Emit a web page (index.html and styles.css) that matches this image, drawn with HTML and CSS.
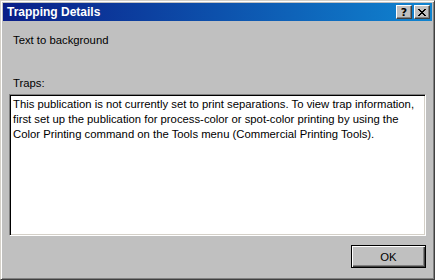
FILE: index.html
```html
<!DOCTYPE html>
<html lang="en">
<head>
  <meta charset="UTF-8">
  <title>Trapping Details</title>
  <link rel="stylesheet" href="styles.css">
</head>
<body>
  <div class="window">
    <div class="titlebar">
      <span class="title">Trapping Details</span>
      <div class="title-buttons">
        <button class="cap-btn help">?</button>
        <button class="cap-btn close">
          <svg width="8" height="7" viewBox="0 0 8 7">
            <path d="M0 0h2v1h-2zM6 0h2v1h-2zM1 1h2v1h-2zM5 1h2v1h-2zM2 2h4v1h-4zM3 3h2v1h-2zM2 4h4v1h-4zM1 5h2v1h-2zM5 5h2v1h-2zM0 6h2v1h-2zM6 6h2v1h-2z" fill="#000"/>
          </svg>
        </button>
      </div>
    </div>
    <div class="content">
      <p class="label first">Text to background</p>
      <p class="label">Traps:</p>
      <div class="textbox">This publication is not currently set to print separations. To view trap information, first set up the publication for process-color or spot-color printing by using the Color Printing command on the Tools menu (Commercial Printing Tools).</div>
      <div class="actions">
        <button class="btn default">OK</button>
      </div>
    </div>
  </div>
</body>
</html>
```

FILE: styles.css
```css
* {
  margin: 0;
  padding: 0;
  box-sizing: border-box;
}

body {
  font-family: 'Liberation Sans', Arial, sans-serif;
  font-size: 11.3px;
  background: #c0c0c0;
}

.window {
  width: 435px;
  height: 280px;
  background: #c0c0c0;
  border: 1px solid;
  border-color: #d4d0c8 #404040 #404040 #d4d0c8;
  box-shadow: inset 1px 1px #fff, inset -1px -1px #808080;
  padding: 2px;
  display: flex;
  flex-direction: column;
}

.titlebar {
  height: 18px;
  background: linear-gradient(to right, #0a1e88, #1084d0);
  display: flex;
  align-items: center;
  justify-content: space-between;
  padding: 0 2px 0 4px;
}

.title {
  color: #fff;
  font-family: 'Liberation Sans', Arial, sans-serif;
  font-weight: bold;
  font-size: 12px;
}

.title-buttons {
  display: flex;
  gap: 2px;
}

.cap-btn {
  width: 16px;
  height: 14px;
  background: #c0c0c0;
  border: 1px solid;
  border-color: #fff #404040 #404040 #fff;
  box-shadow: inset -1px -1px #808080;
  display: flex;
  align-items: center;
  justify-content: center;
  font-family: 'DejaVu Sans', sans-serif;
  font-weight: bold;
  font-size: 11px;
  line-height: 1;
  color: #000;
}

.content {
  flex: 1;
  padding: 0 6px 0 6px;
  display: flex;
  flex-direction: column;
}

.label {
  margin-left: 4px;
  line-height: 14px;
  color: #000;
}

.label.first {
  margin-top: 12px;
  margin-bottom: 29px;
}

.textbox {
  margin-top: 4px;
  height: 142px;
  background: #fff;
  border: 1px solid;
  border-color: #808080 #fff #fff #808080;
  box-shadow: inset 1px 1px #000, inset -1px -1px #d4d0c8;
  padding: 2px 3px;
  line-height: 15px;
  color: #000;
}

.actions {
  display: flex;
  justify-content: flex-end;
  margin-top: 9px;
}

.btn {
  width: 75px;
  height: 23px;
  background: #c0c0c0;
  font-family: 'Liberation Sans', Arial, sans-serif;
  font-size: 11.3px;
  color: #000;
  border: 1px solid #000;
  box-shadow: inset 1px 1px #fff, inset -1px -1px #404040, inset -2px -2px #808080;
}
```
